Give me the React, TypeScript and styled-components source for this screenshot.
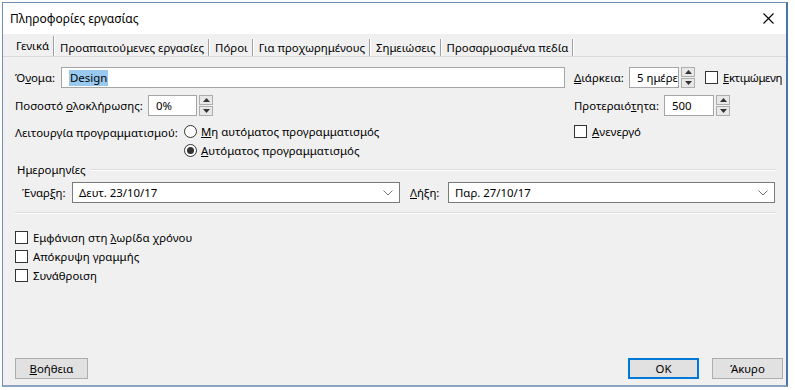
import React from "react";
import styled, { createGlobalStyle } from "styled-components";

const GlobalStyle = createGlobalStyle`
  html, body {
    margin: 0;
    padding: 0;
    background: #ffffff;
  }
  body {
    font-family: "Noto Sans", "Liberation Sans", sans-serif;
    font-size: 11.4px;
    line-height: 16px;
    color: #000;
  }
`;

const Screen = styled.div`
  width: 795px;
  height: 390px;
  box-sizing: border-box;
  padding: 2px 0 0 2px;
  background: #ffffff;
  overflow: hidden;
`;

const Dialog = styled.div`
  width: 786px;
  height: 385px;
  box-sizing: border-box;
  border: 1px solid #6e8fb4;
  border-right: 2px solid #4a74a3;
  border-bottom: 2px solid #8aa3c0;
  background: #f0f0f0;
  display: flex;
  flex-direction: column;
`;

const TitleBar = styled.div`
  height: 31px;
  background: #ffffff;
  display: flex;
  align-items: center;
  justify-content: space-between;
  padding: 0 0 0 7px;
`;

const Title = styled.span`
  font-size: 12px;
`;

const CloseButton = styled.div`
  width: 30px;
  height: 31px;
  display: flex;
  align-items: center;
  justify-content: center;
  margin-right: 3px;
`;

const TabStrip = styled.div`
  display: flex;
  align-items: flex-end;
  height: 22px;
  padding-left: 8px;
  border-bottom: 1px solid #dadada;
`;

const Tab = styled.div<{ $active?: boolean }>`
  height: ${(p) => (p.$active ? "20px" : "17px")};
  display: flex;
  align-items: center;
  padding: 0 4px 0 5px;
  border-right: 1px solid #a0a0a0;
  box-shadow: 1px 0 0 #ffffff;
  margin-right: 1px;
  white-space: nowrap;
`;

const Content = styled.div`
  flex: 1;
  display: flex;
  flex-direction: column;
  padding: 10px 10px 0 12px;
`;

const TopSection = styled.div`
  display: flex;
  gap: 9px;
`;

const LeftColumn = styled.div`
  flex: 1;
  display: flex;
  flex-direction: column;
`;

const RightColumn = styled.div`
  width: 202px;
  display: flex;
  flex-direction: column;
`;

const Row = styled.div<{ $mt?: number; $top?: boolean }>`
  display: flex;
  align-items: ${(p) => (p.$top ? "flex-start" : "center")};
  margin-top: ${(p) => p.$mt ?? 0}px;
  white-space: nowrap;
`;

const Label = styled.span<{ $w?: number; $pl?: number }>`
  box-sizing: border-box;
  width: ${(p) => (p.$w ? `${p.$w}px` : "auto")};
  padding-left: ${(p) => p.$pl ?? 0}px;
  flex-shrink: 0;
  white-space: nowrap;
`;

const TextBox = styled.div<{ $w?: number }>`
  box-sizing: border-box;
  height: 21px;
  ${(p) => (p.$w ? `width: ${p.$w}px;` : "flex: 1;")}
  border: 1px solid #a5a5a5;
  background: #ffffff;
  display: flex;
  align-items: center;
  padding-left: 7px;
  overflow: hidden;
  white-space: nowrap;
  flex-shrink: 0;
`;

const Selected = styled.span`
  background: #99c9ef;
  padding: 0 1px;
`;

const Spin = styled.div`
  width: 14px;
  height: 21px;
  margin-left: 2px;
  display: flex;
  flex-direction: column;
  gap: 1px;
  flex-shrink: 0;
`;

const SpinHalf = styled.div`
  flex: 1;
  box-sizing: border-box;
  border: 1px solid #adadad;
  background: #e8e8e8;
  display: flex;
  align-items: center;
  justify-content: center;
`;

const Box = styled.span`
  width: 13px;
  height: 13px;
  box-sizing: border-box;
  border: 1px solid #333333;
  background: #ffffff;
  flex-shrink: 0;
  margin-right: 5px;
`;

const Radio = styled.span<{ $checked?: boolean }>`
  width: 13px;
  height: 13px;
  box-sizing: border-box;
  border: 1px solid #333333;
  border-radius: 50%;
  background: #ffffff;
  flex-shrink: 0;
  margin-right: 4px;
  display: flex;
  align-items: center;
  justify-content: center;
  &::after {
    content: "";
    display: ${(p) => (p.$checked ? "block" : "none")};
    width: 7px;
    height: 7px;
    border-radius: 50%;
    background: #333333;
  }
`;

const Choice = styled.label<{ $mt?: number; $ml?: number; $tight?: boolean }>`
  display: flex;
  align-items: center;
  margin-top: ${(p) => p.$mt ?? 0}px;
  margin-left: ${(p) => p.$ml ?? 0}px;
  white-space: nowrap;
  height: 13px;
  letter-spacing: ${(p) => (p.$tight ? "-0.4px" : "normal")};
`;

const RadioGroup = styled.div`
  display: flex;
  flex-direction: column;
  gap: 6px;
`;

const GroupHeader = styled.div`
  display: flex;
  align-items: center;
  margin-top: 5px;
  padding-left: 2px;
  gap: 4px;
`;

const Line = styled.div`
  flex: 1;
  height: 1px;
  background: #dcdcdc;
  border-bottom: 1px solid #ffffff;
`;

const Separator = styled.div`
  height: 1px;
  background: #dcdcdc;
  border-bottom: 1px solid #ffffff;
  margin-top: 9px;
`;

const Combo = styled.div<{ $w: number }>`
  box-sizing: border-box;
  width: ${(p) => p.$w}px;
  height: 21px;
  border: 1px solid #7a7a7a;
  background: #ffffff;
  display: flex;
  align-items: center;
  justify-content: space-between;
  padding: 0 6px 0 6px;
  flex-shrink: 0;
`;

const CheckList = styled.div`
  display: flex;
  flex-direction: column;
  gap: 6px;
  margin-top: 17px;
`;

const Footer = styled.div`
  display: flex;
  align-items: center;
  padding: 0 3px 6px 12px;
`;

const Button = styled.div<{ $primary?: boolean; $w: number }>`
  box-sizing: border-box;
  width: ${(p) => p.$w}px;
  height: 21px;
  background: #e1e1e1;
  border: ${(p) => (p.$primary ? "2px solid #0078d7" : "1px solid #adadad")};
  display: flex;
  align-items: center;
  justify-content: center;
`;

const Spacer = styled.div`
  flex: 1;
`;

const ButtonGap = styled.div`
  width: 13px;
`;

const SpinControl = () => (
  <Spin>
    <SpinHalf>
      <svg width="7" height="4" viewBox="0 0 7 4">
        <path d="M0 4 L3.5 0 L7 4 Z" fill="#333" />
      </svg>
    </SpinHalf>
    <SpinHalf>
      <svg width="7" height="4" viewBox="0 0 7 4">
        <path d="M0 0 L3.5 4 L7 0 Z" fill="#333" />
      </svg>
    </SpinHalf>
  </Spin>
);

const Chevron = () => (
  <svg width="10" height="6" viewBox="0 0 10 6">
    <path d="M0.5 0.5 L5 5 L9.5 0.5" fill="none" stroke="#777" strokeWidth="1" />
  </svg>
);

const App = () => {
  const tabs = [
    "Γενικά",
    "Προαπαιτούμενες εργασίες",
    "Πόροι",
    "Για προχωρημένους",
    "Σημειώσεις",
    "Προσαρμοσμένα πεδία",
  ];

  return (
    <>
      <GlobalStyle />
      <Screen>
        <Dialog>
          <TitleBar>
            <Title>Πληροφορίες εργασίας</Title>
            <CloseButton>
              <svg width="11" height="11" viewBox="0 0 11 11">
                <path d="M0.5 0.5 L10.5 10.5 M10.5 0.5 L0.5 10.5" stroke="#000" strokeWidth="1.1" />
              </svg>
            </CloseButton>
          </TitleBar>
          <TabStrip>
            {tabs.map((t, i) => (
              <Tab key={t} $active={i === 0}>
                {t}
              </Tab>
            ))}
          </TabStrip>
          <Content>
            <TopSection>
              <LeftColumn>
                <Row>
                  <Label $w={46}>
                    Ό<u>ν</u>ομα:
                  </Label>
                  <TextBox>
                    <Selected>Design</Selected>
                  </TextBox>
                </Row>
                <Row $mt={7}>
                  <Label $w={133}>
                    Ποσοστό <u>ο</u>λοκλήρωσης:
                  </Label>
                  <TextBox $w={49}>0%</TextBox>
                  <SpinControl />
                </Row>
                <Row $mt={9} $top>
                  <Label $w={169}>Λειτουργία προγραμματισμού:</Label>
                  <RadioGroup>
                    <Choice>
                      <Radio />
                      <span>
                        <u>Μ</u>η αυτόματος προγραμματισμός
                      </span>
                    </Choice>
                    <Choice>
                      <Radio $checked />
                      <span>
                        <u>Α</u>υτόματος προγραμματισμός
                      </span>
                    </Choice>
                  </RadioGroup>
                </Row>
              </LeftColumn>
              <RightColumn>
                <Row>
                  <Label $w={55}>
                    <u>Δ</u>ιάρκεια:
                  </Label>
                  <TextBox $w={50}>5 ημέρες</TextBox>
                  <SpinControl />
                  <Choice $ml={10} $tight>
                    <Box />
                    <span>
                      <u>Ε</u>κτιμώμενη
                    </span>
                  </Choice>
                </Row>
                <Row $mt={7}>
                  <Label $w={90}>
                    Προτεραιό<u>τ</u>ητα:
                  </Label>
                  <TextBox $w={50}>500</TextBox>
                  <SpinControl />
                </Row>
                <Choice $mt={9}>
                  <Box />
                  <span>
                    <u>Α</u>νενεργό
                  </span>
                </Choice>
              </RightColumn>
            </TopSection>

            <GroupHeader>
              <span>Ημερομηνίες</span>
              <Line />
            </GroupHeader>
            <Row $mt={4}>
              <Label $w={57} $pl={7}>
                Έναρ<u>ξ</u>η:
              </Label>
              <Combo $w={328}>
                <span>Δευτ. 23/10/17</span>
                <Chevron />
              </Combo>
              <Label $w={48} $pl={10}>
                <u>Λ</u>ήξη:
              </Label>
              <Combo $w={327}>
                <span>Παρ. 27/10/17</span>
                <Chevron />
              </Combo>
            </Row>
            <Separator />

            <CheckList>
              <Choice>
                <Box />
                <span>
                  Εμφάνιση στη <u>λ</u>ωρίδα χρόνου
                </span>
              </Choice>
              <Choice>
                <Box />
                <span>Απόκρυψη γραμμής</span>
              </Choice>
              <Choice>
                <Box />
                <span>Συνάθροιση</span>
              </Choice>
            </CheckList>
          </Content>
          <Footer>
            <Button $w={73}>
              <span>
                <u>Β</u>οήθεια
              </span>
            </Button>
            <Spacer />
            <Button $w={71} $primary>
              OK
            </Button>
            <ButtonGap />
            <Button $w={71}>Άκυρο</Button>
          </Footer>
        </Dialog>
      </Screen>
    </>
  );
};

export default App;
